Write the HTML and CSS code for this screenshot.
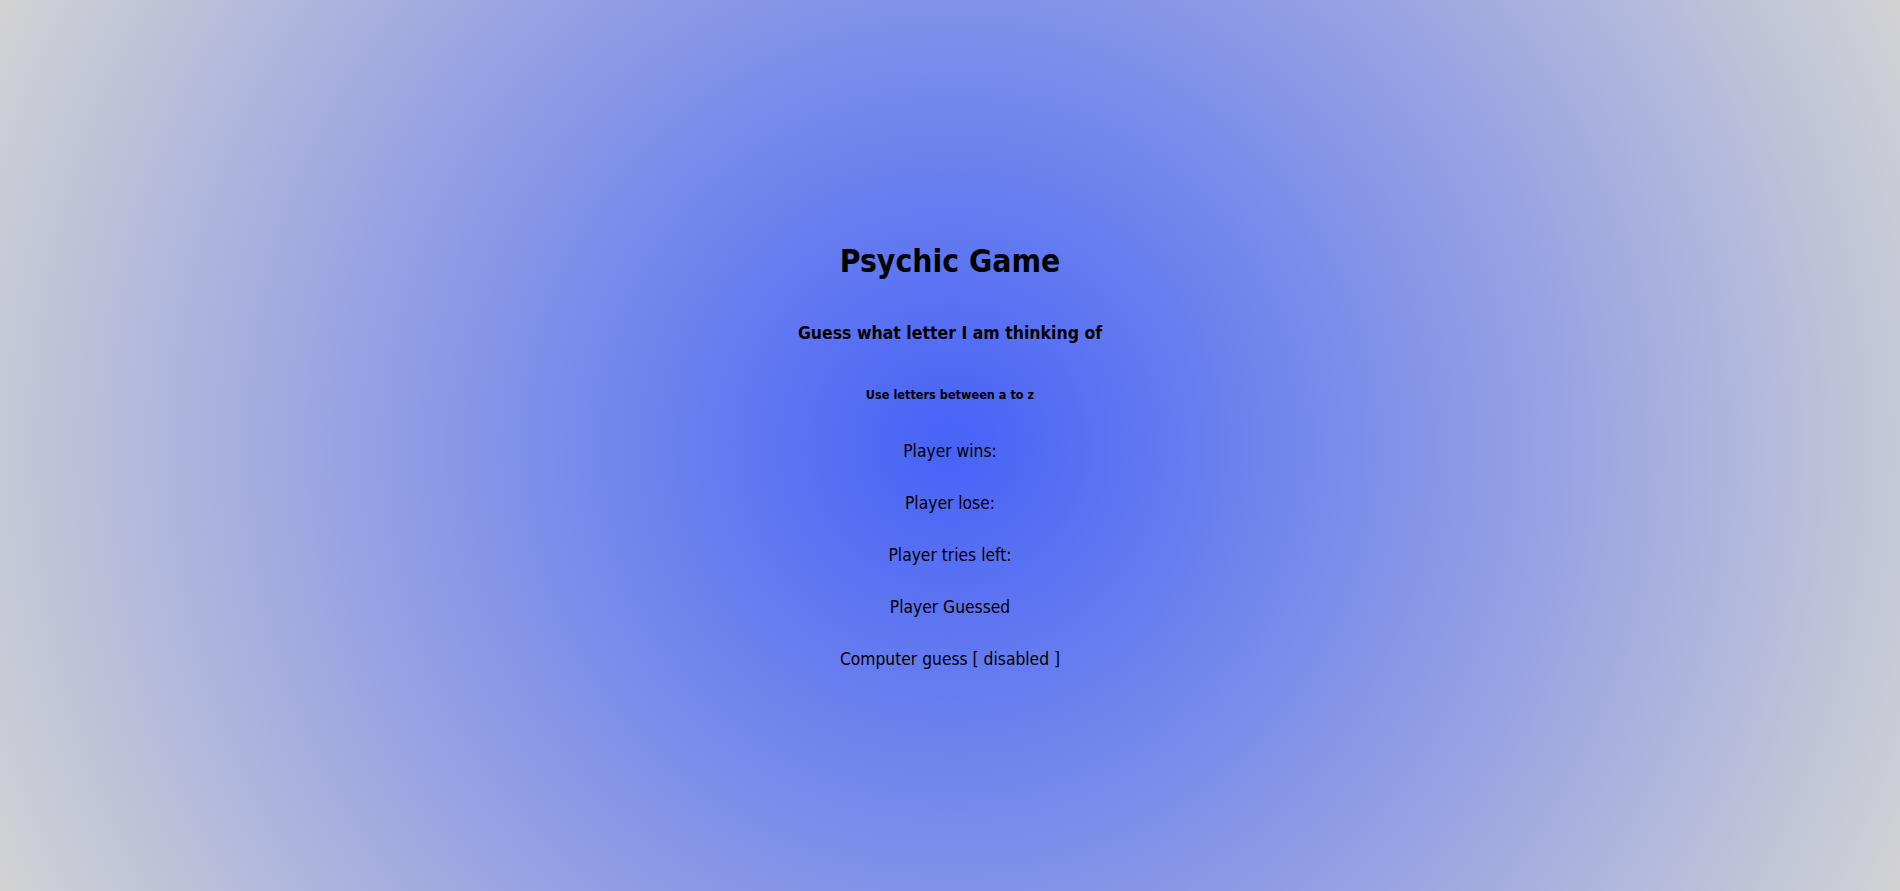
FILE: index.html
```html
<!DOCTYPE html>
<html lang="en">
<head>
<meta charset="utf-8">
<title>Psychic Game</title>
<link rel="stylesheet" href="styles.css">
</head>
<body>
<main class="game">
  <h1 class="title">Psychic Game</h1>
  <h2 class="subtitle">Guess what letter I am thinking of</h2>
  <p class="hint">Use letters between a to z</p>
  <div class="stats">
    <p class="stat">Player wins:</p>
    <p class="stat">Player lose:</p>
    <p class="stat">Player tries left:</p>
    <p class="stat">Player Guessed</p>
    <p class="stat">Computer guess [ disabled ]</p>
  </div>
</main>
</body>
</html>
```
FILE: styles.css
```css
html, body {
  margin: 0;
  height: 100%;
}
body {
  background: radial-gradient(circle at 50% 50%, rgb(70, 98, 248) 0%, rgb(211, 211, 211) 100%);
  color: #000;
  font-family: "DejaVu Sans Condensed", "DejaVu Sans", "Liberation Sans", sans-serif;
  font-stretch: condensed;
}
.game {
  display: flex;
  flex-direction: column;
  align-items: center;
  padding-top: 239px;
  text-align: center;
}
.title {
  margin: 0;
  font-size: 31.6px;
  line-height: 44px;
  font-weight: bold;
}
.subtitle {
  margin: 35px 0 0;
  font-size: 17.5px;
  line-height: 30px;
  font-weight: bold;
}
.hint {
  margin: 37px 0 0;
  font-size: 12.6px;
  line-height: 20px;
  font-weight: bold;
}
.stats {
  display: flex;
  flex-direction: column;
  align-items: center;
  gap: 28px;
  margin-top: 34px;
}
.stat {
  margin: 0;
  font-size: 17.3px;
  line-height: 24px;
}
```
